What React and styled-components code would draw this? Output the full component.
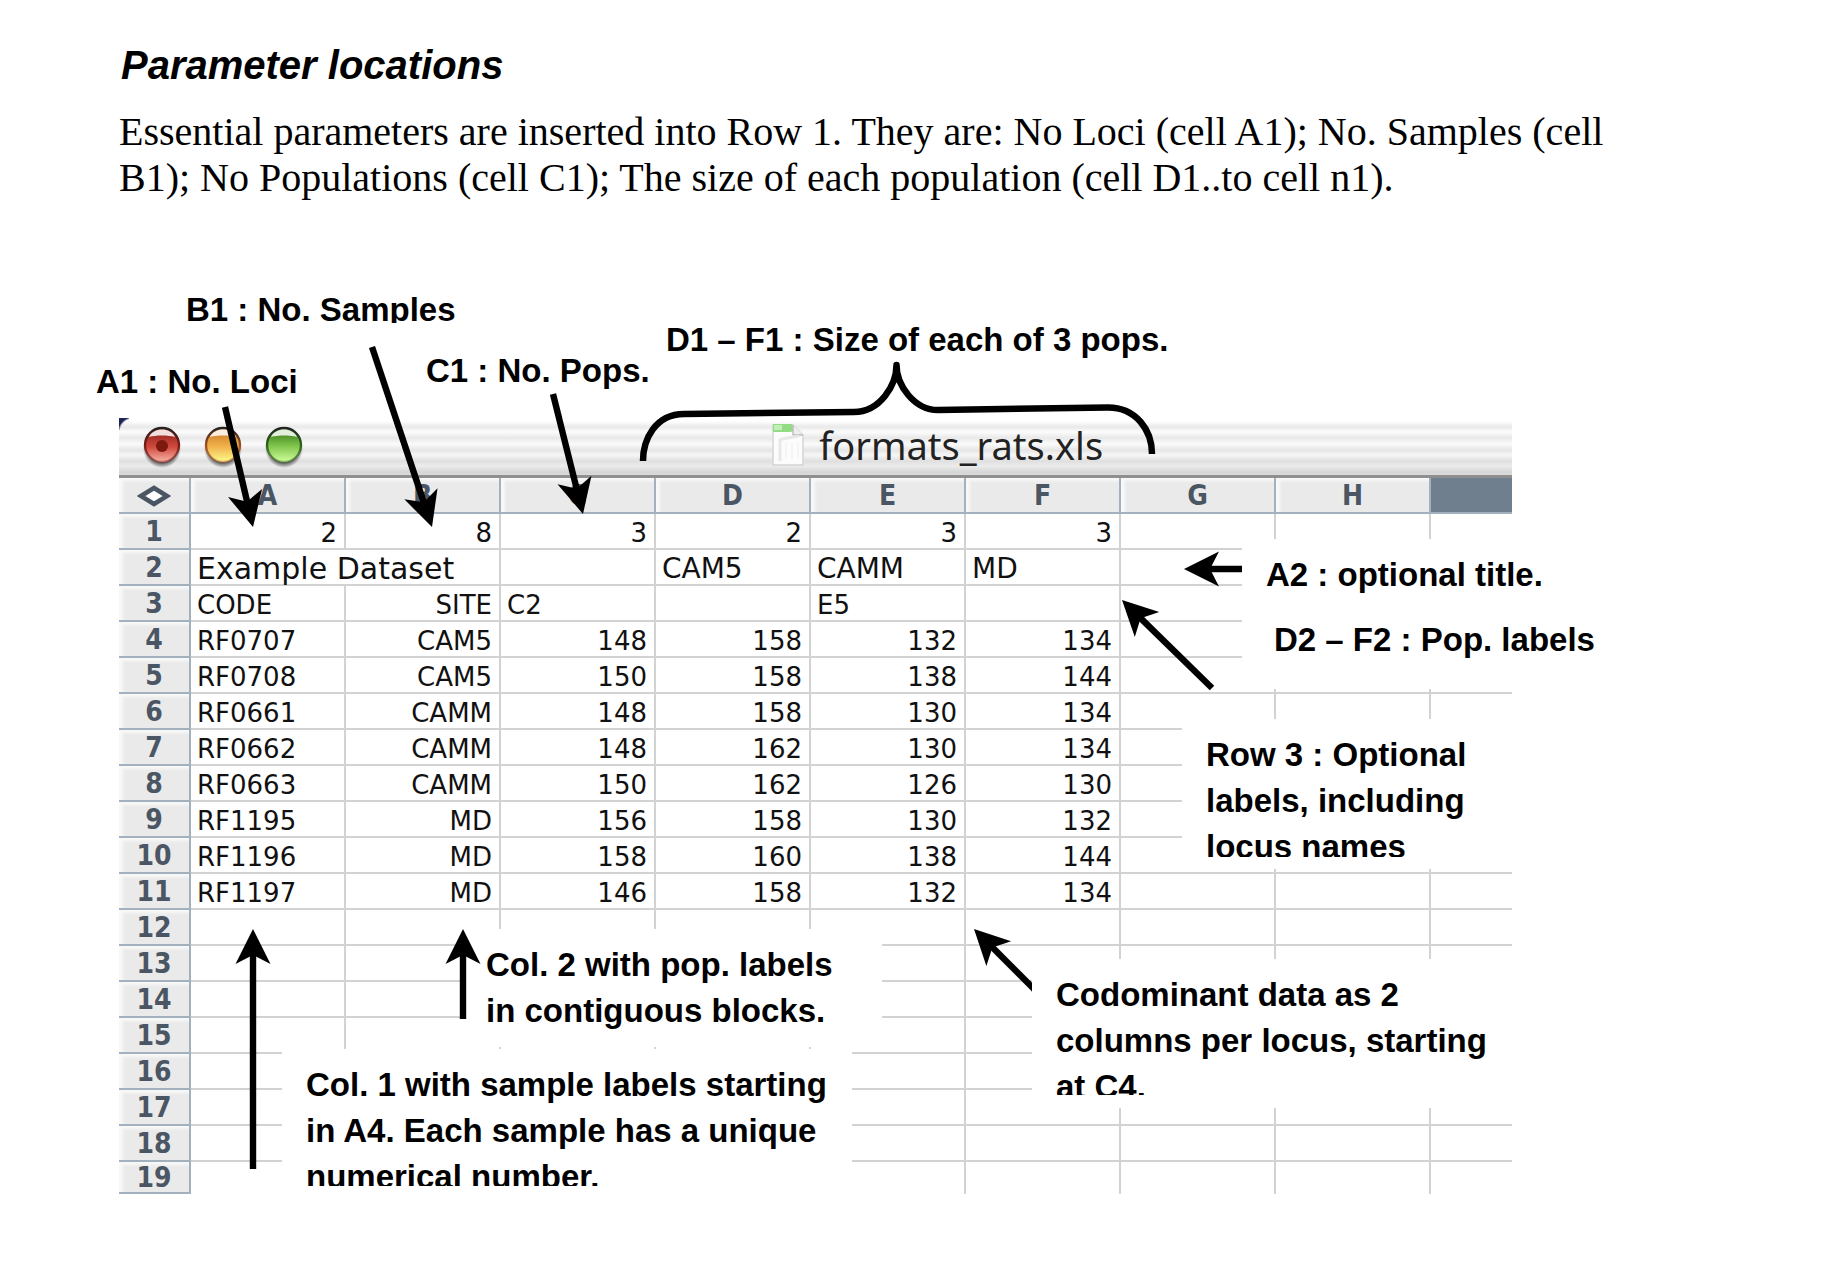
import React from "react";
import styled, { createGlobalStyle } from "styled-components";

const GlobalStyle = createGlobalStyle`
  *, *::before, *::after { box-sizing: border-box; }
  body { margin: 0; background: #fff; color: #000; }
`;

const Page = styled.main`
  padding: 39px 200px 60px 119px;
`;

const Heading = styled.h1`
  margin: 0 0 18px;
  padding-left: 2px;
  font: italic bold 40px/52px "Liberation Sans", Arial, sans-serif;
`;

const Intro = styled.p`
  margin: 0;
  font: 40px/46px "Liberation Serif", "Times New Roman", serif;
`;

const Figure = styled.figure`
  position: relative;
  margin: 39px 110px 0 0;
  padding-top: 178px;
`;

const SheetWindow = styled.section`
  overflow: hidden;
  background: #fff;
`;

const TitleBar = styled.header`
  display: flex;
  align-items: center;
  height: 60px;
  padding: 0 25px 3px;
  border-bottom: 3px solid #8f8f8f;
  background:
    radial-gradient(circle at 14px 14px, transparent 13px, #1c2656 15px) 0 0 / 10px 12px no-repeat,
    linear-gradient(#fff 3px, #e9e9e9 9px, #fcfcfc 14px, #e8e8e8 20px, #fbfbfb 26px,
      #e5e5e5 32px, #f6f6f6 37px, #dfdfdf 43px, #ececec 48px, #d6d6d6 54px, #dadada 57px);
`;

const Lights = styled.div`
  display: flex;
  flex: 18 1 0;
  gap: 25px;
`;

const Light = styled.button`
  width: 36px;
  height: 38px;
  padding: 0;
  border: 0;
  background: none;
  svg { display: block; overflow: visible; }
`;

const FileName = styled.h2`
  display: flex;
  align-items: center;
  gap: 15px;
  margin: 0;
  color: #222;
  font: 38px/50px "Noto Sans", "Open Sans", sans-serif;
`;

const BarEnd = styled.div`
  flex: 11 1 0;
`;

const Sheet = styled.table`
  width: 100%;
  table-layout: fixed;
  border-collapse: separate;
  border-spacing: 0;
`;

const RowHeadCol = styled.col`
  width: 72px;
`;

const DataCol = styled.col`
  width: 155px;
`;

const HeadCell = styled.th`
  height: 36px;
  padding: 2px 0 0;
  border-right: 2px solid #a3b1be;
  border-bottom: 2px solid #a3b1be;
  background: ${(p) => (p.$dark ? "#6f7f8e" : "#eaeaea")};
  box-shadow: ${(p) => (p.$dark ? "none" : "inset 4px 3px 3px #f8f8f8")};
  color: #4a5664;
  font: bold 28px/32px "DejaVu Sans Condensed", "DejaVu Sans", sans-serif;
  svg { display: block; margin: 0 auto; }
  &:last-child { border-right: 0; }
`;

const RowHead = styled(HeadCell)`
  height: ${(p) => (p.$last ? 32 : 36)}px;
  line-height: ${(p) => (p.$last ? 28 : 32)}px;
`;

const Cell = styled.td`
  padding: 4px 7px 0 6px;
  border-right: 2px solid #d2d2d2;
  border-bottom: 2px solid #d2d2d2;
  color: #111;
  font: ${(p) => p.$size || 26}px/30px "DejaVu Sans", Verdana, sans-serif;
  text-align: ${(p) => (p.$left ? "left" : "right")};
  white-space: nowrap;
  &:last-child { border-right: 0; }
  tr:last-child > & { padding: 0; border-bottom: 0; }
`;

const Callout = styled.div`
  position: absolute;
  left: ${(p) => p.$x}px;
  top: ${(p) => p.$y}px;
  width: ${(p) => p.$w}px;
  height: ${(p) => p.$h}px;
  padding: 13px 0 0 24px;
  background: ${(p) => (p.$plain ? "none" : "#fff")};
`;

const CalloutText = styled.p`
  margin: 0;
  max-height: ${(p) => (p.$clip ? `${p.$clip}px` : "none")};
  overflow: hidden;
  font: bold 33px/46px "Liberation Sans", Arial, sans-serif;
  white-space: pre;
`;

const Ink = styled.svg`
  position: absolute;
  inset: 0;
  width: 100%;
  height: 100%;
  overflow: visible;
  pointer-events: none;
`;

const LETTERS = ["A", "B", "C", "D", "E", "F", "G", "H"];

const SAMPLES = [
  ["RF0707", "CAM5", 148, 158, 132, 134],
  ["RF0708", "CAM5", 150, 158, 138, 144],
  ["RF0661", "CAMM", 148, 158, 130, 134],
  ["RF0662", "CAMM", 148, 162, 130, 134],
  ["RF0663", "CAMM", 150, 162, 126, 130],
  ["RF1195", "MD", 156, 158, 130, 132],
  ["RF1196", "MD", 158, 160, 138, 144],
  ["RF1197", "MD", 146, 158, 132, 134],
];

const EMPTY_ROWS = [12, 13, 14, 15, 16, 17, 18, 19];

const CALLOUTS = [
  { x: 43, y: 34, w: 320, h: 49, clip: 36, plain: true, text: "B1 : No. Samples" },
  { x: -47, y: 106, w: 260, h: 49, clip: 36, plain: true, text: "A1 : No. Loci" },
  { x: 283, y: 95, w: 280, h: 60, plain: true, text: "C1 : No. Pops." },
  { x: 523, y: 64, w: 560, h: 60, plain: true, text: "D1 – F1 : Size of each of 3 pops." },
  { x: 1123, y: 299, w: 370, h: 150, text: "A2 : optional title." },
  { x: 1131, y: 364, w: 370, h: 70, text: "D2 – F2 : Pop. labels" },
  { x: 1063, y: 479, w: 350, h: 150, clip: 125, text: "Row 3 : Optional\nlabels, including\nlocus names" },
  { x: 913, y: 719, w: 490, h: 149, clip: 123, text: "Codominant data as 2\ncolumns per locus, starting\nat C4." },
  { x: 343, y: 689, w: 420, h: 118, text: "Col. 2 with pop. labels\nin contiguous blocks." },
  { x: 163, y: 809, w: 570, h: 150, clip: 124, text: "Col. 1 with sample labels starting\nin A4. Each sample has a unique\nnumerical number." },
];

const ARROWS = [
  [225, 407, 253, 527],
  [372, 347, 432, 527],
  [553, 394, 583, 514],
  [1242, 569, 1184, 569],
  [1212, 688, 1122, 600],
  [463, 1019, 463, 929],
  [253, 1169, 253, 929],
];

function Arrow({ from, to, ...rest }) {
  const dx = to[0] - from[0];
  const dy = to[1] - from[1];
  const length = Math.hypot(dx, dy);
  const angle = (Math.atan2(dy, dx) * 180) / Math.PI;
  return (
    <g {...rest}>
      <g transform={`translate(${to[0]} ${to[1]}) rotate(${angle})`}>
        <path d={`M${-length} -3.2H-22V3.2H${-length}Z`} />
        <path d="M0 0L-35 -17.5L-26 0L-35 17.5Z" />
      </g>
    </g>
  );
}

function LightIcon({ id, top, mid, low, rim, dot }) {
  return (
    <svg width="36" height="38" viewBox="0 0 36 38" aria-hidden="true">
      <defs>
        <linearGradient id={`${id}-body`} x1="0" y1="0" x2="0" y2="1">
          <stop offset="0.2" stopColor={top} />
          <stop offset="0.55" stopColor={mid} />
          <stop offset="1" stopColor={low} />
        </linearGradient>
        <radialGradient id={`${id}-shade`}>
          <stop offset="0.75" stopColor="#333" stopOpacity="0.7" />
          <stop offset="1" stopColor="#333" stopOpacity="0" />
        </radialGradient>
        <linearGradient id={`${id}-rim`} x1="0" y1="0" x2="0" y2="1">
          <stop offset="0" stopColor="#222" />
          <stop offset="0.5" stopColor={rim} />
          <stop offset="1" stopColor={rim} stopOpacity="0.4" />
        </linearGradient>
      </defs>
      <ellipse cx="18" cy="23" rx="19" ry="19" fill={`url(#${id}-shade)`} />
      <circle cx="18" cy="19" r="17" fill={`url(#${id}-body)`} stroke={`url(#${id}-rim)`} strokeWidth="2.4" />
      <path d="M5 11C9 1 27 1 31 11C25 9 11 9 5 11Z" fill="#fff" opacity="0.85" />
      {dot && <circle cx="18" cy="20" r="6" fill="#7c1a10" />}
    </svg>
  );
}

function FileIcon() {
  return (
    <svg width="32" height="44" viewBox="0 0 32 44" aria-hidden="true">
      <path d="M1 2H21L31 12V42H1Z" fill="#fcfcfc" stroke="#d4d4d4" strokeWidth="1.4" />
      <path d="M1 1H20L22 7L19 9H1Z" fill="#93dc83" />
      <path d="M2 2H10V7H2Z" fill="#c2efb8" />
      <path d="M21 2V12H31" fill="#eee" stroke="#bbb" strokeWidth="1.4" />
      <path d="M8 38V18Q8 16 10 16L27 13" fill="none" stroke="#e8e8e8" strokeWidth="3" />
      <path d="M14 20V36M20 20V36M26 20V36" stroke="#f5f5f5" strokeWidth="2" />
    </svg>
  );
}

function blanks(count) {
  return Array.from({ length: count }, (_, i) => <Cell key={`blank-${i}`} />);
}

export default function App() {
  return (
    <Page>
      <GlobalStyle />
      <Heading>Parameter locations</Heading>
      <Intro>
        Essential parameters are inserted into Row 1. They are: No Loci (cell A1); No. Samples (cell
        B1); No Populations (cell C1); The size of each population (cell D1..to cell n1).
      </Intro>
      <Figure>
        <SheetWindow>
          <TitleBar>
            <Lights>
              <Light aria-label="Close">
                <LightIcon id="close" top="#a02c24" mid="#d0483c" low="#f8b4a8" rim="#7a1a14" dot />
              </Light>
              <Light aria-label="Minimize">
                <LightIcon id="minimize" top="#d88a30" mid="#f2b24c" low="#fdfd8c" rim="#a04c1c" />
              </Light>
              <Light aria-label="Zoom">
                <LightIcon id="zoom" top="#4c9028" mid="#84c850" low="#d0ff9c" rim="#2c6418" />
              </Light>
            </Lights>
            <FileName>
              <FileIcon />
              formats_rats.xls
            </FileName>
            <BarEnd />
          </TitleBar>
          <Sheet>
            <colgroup>
              <RowHeadCol />
              {LETTERS.map((letter) => (
                <DataCol key={letter} />
              ))}
              <col />
            </colgroup>
            <thead>
              <tr>
                <HeadCell>
                  <svg width="36" height="24" viewBox="0 0 36 24" aria-hidden="true">
                    <path d="M5 12L18 4L31 12L18 20Z" fill="#fff" stroke="#4a5664" strokeWidth="4.5" />
                  </svg>
                </HeadCell>
                {LETTERS.map((letter) => (
                  <HeadCell key={letter} scope="col">{letter}</HeadCell>
                ))}
                <HeadCell $dark />
              </tr>
            </thead>
            <tbody>
              <tr>
                <RowHead scope="row">1</RowHead>
                {[2, 8, 3, 2, 3, 3].map((value, i) => (
                  <Cell key={i}>{value}</Cell>
                ))}
                {blanks(3)}
              </tr>
              <tr>
                <RowHead scope="row">2</RowHead>
                <Cell colSpan={2} $left $size={30}>Example Dataset</Cell>
                <Cell />
                <Cell $left $size={28}>CAM5</Cell>
                <Cell $left $size={28}>CAMM</Cell>
                <Cell $left $size={28}>MD</Cell>
                {blanks(3)}
              </tr>
              <tr>
                <RowHead scope="row">3</RowHead>
                <Cell $left>CODE</Cell>
                <Cell>SITE</Cell>
                <Cell $left>C2</Cell>
                <Cell />
                <Cell $left>E5</Cell>
                {blanks(4)}
              </tr>
              {SAMPLES.map(([code, ...values], i) => (
                <tr key={code}>
                  <RowHead scope="row">{i + 4}</RowHead>
                  <Cell $left>{code}</Cell>
                  {values.map((value, j) => (
                    <Cell key={j}>{value}</Cell>
                  ))}
                  {blanks(3)}
                </tr>
              ))}
              {EMPTY_ROWS.map((row) => (
                <tr key={row}>
                  <RowHead scope="row" $last={row === 19}>{row}</RowHead>
                  {blanks(9)}
                </tr>
              ))}
            </tbody>
          </Sheet>
        </SheetWindow>
        {CALLOUTS.map((c) => (
          <Callout key={c.text} $x={c.x} $y={c.y} $w={c.w} $h={c.h} $plain={c.plain}>
            <CalloutText $clip={c.clip}>{c.text}</CalloutText>
          </Callout>
        ))}
        <Ink aria-hidden="true">
          <defs>
            <clipPath id="tail-clip">
              <rect x="940" y="900" width="92" height="120" />
            </clipPath>
          </defs>
          <g transform="translate(-119 -240)">
            {ARROWS.map(([x1, y1, x2, y2]) => (
              <Arrow key={`${x1}-${y1}`} from={[x1, y1]} to={[x2, y2]} />
            ))}
            <Arrow from={[1042, 997]} to={[974, 929]} clipPath="url(#tail-clip)" />
            <path
              d="M643 461C643 440 655 414 684 414L854 412C880 412 896.500 385 896.500 365C896.500 385 914 410 938 410L1108 407.500C1136 407.500 1152 430 1152 454"
              fill="none"
              stroke="#000"
              strokeWidth="6.5"
              strokeLinejoin="round"
            />
          </g>
        </Ink>
      </Figure>
    </Page>
  );
}
